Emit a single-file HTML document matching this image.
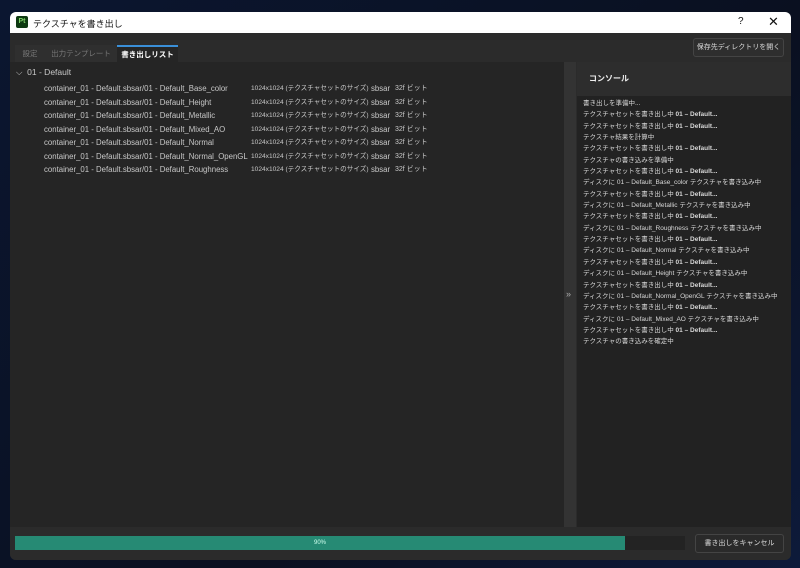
<!DOCTYPE html>
<html><head><meta charset="utf-8"><style>
*{margin:0;padding:0;box-sizing:border-box}
body{width:800px;height:568px;overflow:hidden;background:linear-gradient(135deg,#0b1630 0%,#0a1020 60%,#0d1a3a 100%);font-family:"Liberation Sans","Noto Sans CJK JP",sans-serif;position:relative}
.win{position:absolute;left:10px;top:12px;width:781px;height:548px;background:#2b2b2b;border-radius:6px;overflow:hidden}
.title{position:absolute;left:0;top:0;width:100%;height:21px;background:#fff;color:#111;font-size:9px}
.logo{position:absolute;left:6px;top:4px;width:12px;height:12px;background:#0e3a12;border-radius:2px;color:#7fd36a;font-size:7px;font-weight:bold;line-height:12px;text-align:center}
.abs{position:absolute;white-space:nowrap}
.tabbar{position:absolute;left:0;top:21px;width:100%;height:30px;background:#2b2b2b}
.tab{position:absolute;top:12px;height:18px;font-size:7.5px;color:#777;line-height:18px;text-align:center}
.left{position:absolute;left:0;top:50px;width:554px;height:465px;background:#252525}
.row{position:absolute;font-size:7.8px;color:#c8c8c8;white-space:nowrap;line-height:13.5px}
.cj{font-size:7px}
.split{position:absolute;left:554px;top:50px;width:12px;height:465px;background:#333;color:#aaa;font-size:9px}
.right{position:absolute;left:567px;top:50px;width:214px;height:465px;background:#222}
.chead{position:absolute;left:0;top:0;width:100%;height:34px;background:#2d2d2d;color:#eee;font-size:8px;font-weight:bold;padding:11px 0 0 12px}
.con{position:absolute;left:6px;top:36px;font-size:6.5px;color:#d8d8d8;line-height:11.35px;white-space:nowrap}
.con b{font-weight:bold}
</style></head><body>
<div class="win">
 <div class="title"><div class="logo">Pt</div><span class="abs" style="left:23px;top:5px">テクスチャを書き出し</span><span class="abs" style="left:728px;top:4px;font-size:10px">?</span><span class="abs" style="left:758px;top:2px;font-size:13px">✕</span></div>
 <div class="tabbar">
  <div class="tab" style="left:5px;width:30px;background:#2f2f2f">設定</div>
  <div class="tab" style="left:35px;background:#2f2f2f;width:72px">出力テンプレート</div>
  <div class="tab" style="left:107px;background:#252525;color:#fff;font-weight:bold;border-top:2px solid #3a8fd8;line-height:16px;width:61px">書き出しリスト</div>
  <div class="abs" style="left:683px;top:5px;width:91px;height:19px;border:1px solid #444;border-radius:3px;background:#2e2e2e;color:#ddd;font-size:7px;text-align:center;line-height:17px">保存先ディレクトリを開く</div>
 </div>
 <div class="left">
  <div class="row" style="left:6px;top:4px;font-size:8.5px">⌵&nbsp; 01 - Default</div>
  <div class="row" style="left:34px;top:20px">container_01 - Default.sbsar/01 - Default_Base_color<br>container_01 - Default.sbsar/01 - Default_Height<br>container_01 - Default.sbsar/01 - Default_Metallic<br>container_01 - Default.sbsar/01 - Default_Mixed_AO<br>container_01 - Default.sbsar/01 - Default_Normal<br>container_01 - Default.sbsar/01 - Default_Normal_OpenGL<br>container_01 - Default.sbsar/01 - Default_Roughness</div>
  <div class="row" style="left:241px;top:20px;font-size:6.6px">1024x1024 (テクスチャセットのサイズ)<br>1024x1024 (テクスチャセットのサイズ)<br>1024x1024 (テクスチャセットのサイズ)<br>1024x1024 (テクスチャセットのサイズ)<br>1024x1024 (テクスチャセットのサイズ)<br>1024x1024 (テクスチャセットのサイズ)<br>1024x1024 (テクスチャセットのサイズ)</div>
  <div class="row" style="left:361px;top:20px">sbsar<br>sbsar<br>sbsar<br>sbsar<br>sbsar<br>sbsar<br>sbsar</div>
  <div class="row cj" style="left:385px;top:20px">32f ビット<br>32f ビット<br>32f ビット<br>32f ビット<br>32f ビット<br>32f ビット<br>32f ビット</div>
 </div>
 <div class="split"><span class="abs" style="left:2px;top:227px">»</span></div>
 <div class="right">
  <div class="chead">コンソール</div>
  <div class="con">書き出しを準備中...<br>テクスチャセットを書き出し中 <b>01 – Default...</b><br>テクスチャセットを書き出し中 <b>01 – Default...</b><br>テクスチャ結果を計算中<br>テクスチャセットを書き出し中 <b>01 – Default...</b><br>テクスチャの書き込みを準備中<br>テクスチャセットを書き出し中 <b>01 – Default...</b><br>ディスクに 01 – Default_Base_color テクスチャを書き込み中<br>テクスチャセットを書き出し中 <b>01 – Default...</b><br>ディスクに 01 – Default_Metallic テクスチャを書き込み中<br>テクスチャセットを書き出し中 <b>01 – Default...</b><br>ディスクに 01 – Default_Roughness テクスチャを書き込み中<br>テクスチャセットを書き出し中 <b>01 – Default...</b><br>ディスクに 01 – Default_Normal テクスチャを書き込み中<br>テクスチャセットを書き出し中 <b>01 – Default...</b><br>ディスクに 01 – Default_Height テクスチャを書き込み中<br>テクスチャセットを書き出し中 <b>01 – Default...</b><br>ディスクに 01 – Default_Normal_OpenGL テクスチャを書き込み中<br>テクスチャセットを書き出し中 <b>01 – Default...</b><br>ディスクに 01 – Default_Mixed_AO テクスチャを書き込み中<br>テクスチャセットを書き出し中 <b>01 – Default...</b><br>テクスチャの書き込みを確定中</div>
 </div>
 <div class="abs" style="left:0;top:515px;width:100%;height:33px;background:#2b2b2b"></div>
 <div class="abs" style="left:5px;top:524px;width:670px;height:14px;background:#232323"></div>
 <div class="abs" style="left:5px;top:524px;width:610px;height:14px;background:#268a74;color:#cfe;font-size:6px;text-align:center;line-height:14px">90%</div>
 <div class="abs" style="left:685px;top:522px;width:89px;height:19px;border:1px solid #444;border-radius:3px;background:#2a2a2a;color:#ddd;font-size:7px;text-align:center;line-height:17px">書き出しをキャンセル</div>
</div>
</body></html>
